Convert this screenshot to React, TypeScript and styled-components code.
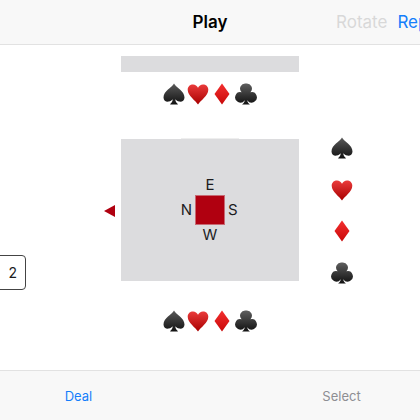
import React from "react";
import styled, {createGlobalStyle} from "styled-components";

const GlobalStyle = createGlobalStyle`
  html, body {
    margin: 0;
    padding: 0;
    background: white;
    overflow: hidden;
  }

  body {
    font-family: Inter, "Liberation Sans", sans-serif;
    color: #1c1c1e;
  }
`;

const StyledPage = styled.div`
  display: flex;
  flex-direction: column;
  width: 420px;
  height: 420px;
  overflow: hidden;
`;

const StyledHeader = styled.header`
  flex: 0 0 45px;
  box-sizing: border-box;
  display: flex;
  align-items: center;
  white-space: nowrap;
  overflow: hidden;
  background: #f8f8f8;
  border-bottom: 1px solid #e2e2e2;
`;

const StyledTitle = styled.div`
  flex: 0 0 420px;
  text-align: center;
  font-size: 17px;
  font-weight: 600;
  color: #000;
`;

const StyledHeaderActions = styled.div`
  display: flex;
  gap: 10px;
  margin-left: -84px;
`;

const StyledHeaderAction = styled.span<{ $disabled?: boolean }>`
  font-size: 17px;
  color: ${p => (p.$disabled ? "#d8d8d8" : "#147efb")};
`;

const StyledMain = styled.main`
  flex: 1;
  display: grid;
  grid-template-columns: 121px 178px 1fr;
  grid-template-rows: 16px 34px 33px 142px 52px;
  padding-top: 11px;
`;

const StyledBar = styled.div`
  grid-column: 2;
  grid-row: 1;
  background: #dcdcde;
`;

const StyledSuitRow = styled.div<{ $row: number }>`
  grid-column: 2;
  grid-row: ${p => p.$row};
  align-self: end;
  display: flex;
  justify-content: center;
`;

const StyledLeftCell = styled.div`
  grid-column: 1;
  grid-row: 4;
  display: flex;
  flex-direction: column;
`;

const StyledArrow = styled.div`
  align-self: flex-end;
  width: 0;
  height: 0;
  margin: 66px 6px 0 0;
  border-top: 6px solid transparent;
  border-bottom: 6px solid transparent;
  border-right: 11px solid #b00010;
`;

const StyledCountButton = styled.div`
  box-sizing: border-box;
  flex: 0 0 35px;
  width: 40px;
  margin: 38px 0 -9px -14px;
  padding-right: 8px;
  display: flex;
  align-items: center;
  justify-content: flex-end;
  border: 1px solid #444;
  border-radius: 4px;
  font-size: 14px;
  background: white;
`;

const StyledBoard = styled.div`
  position: relative;
  grid-column: 2;
  grid-row: 4;
  display: grid;
  grid-template-columns: 1fr 30px 1fr;
  grid-template-rows: 1fr 30px 1fr;
  background: #dcdcde;

  &::before {
    content: "";
    position: absolute;
    top: -1px;
    left: 60px;
    width: 58px;
    height: 1px;
    background: #eeeeee;
  }
`;

const StyledSeat = styled.div<{ $col: number; $row: number; $align: string; $justify: string }>`
  grid-column: ${p => p.$col};
  grid-row: ${p => p.$row};
  display: flex;
  align-items: ${p => p.$align};
  justify-content: ${p => p.$justify};
  padding: 2px 3px;
  font-size: 15px;
  line-height: 16px;
  color: #1c1c1e;
`;

const StyledCenter = styled.div`
  grid-column: 2;
  grid-row: 2;
  background: #b00010;
  box-shadow: 0 0 0 1px #c76a74 inset;
`;

const StyledRightCell = styled.div`
  grid-column: 3;
  grid-row: 4;
  display: flex;
  flex-direction: column;
  align-items: flex-start;
  gap: 17.5px;
  margin-top: -3px;
  padding-left: 31px;
`;

const StyledFooter = styled.footer`
  flex: 0 0 50px;
  box-sizing: border-box;
  display: flex;
  justify-content: space-between;
  align-items: center;
  background: #f8f8f8;
  border-top: 1px solid #e2e2e2;
`;

const StyledFooterAction = styled.div<{ $disabled?: boolean }>`
  flex: 0 0 157px;
  text-align: center;
  font-size: 13px;
  color: ${p => (p.$disabled ? "#8e8e93" : "#147efb")};
`;

const StyledSuitCell = styled.div`
  flex: 0 0 23.5px;
  display: flex;
  justify-content: center;
`;

const StyledSuitSvg = styled.svg`
  display: block;
  flex: 0 0 24px;
  width: 24px;
  height: 24px;
`;

type SuitName = "spade" | "heart" | "diamond" | "club";

const SUITS: SuitName[] = ["spade", "heart", "diamond", "club"];

const SUIT_SHAPES: Record<SuitName, React.ReactNode> = {
    spade: <path d="M12 1.500C10 5.500 1.500 9 1.500 15.400c0 3.300 2.800 4.800 5.300 4.200 1.600-.4 2.900-1.300 3.900-2.400-.1 2-1 3.500-2.500 4.800v.5h7.600v-.5c-1.500-1.300-2.400-2.800-2.500-4.800 1 1.100 2.300 2 3.900 2.400 2.500.6 5.300-.9 5.300-4.200C22.500 9 14 5.500 12 1.500Z"/>,
    heart: <path d="M12 22.500C9.500 18.500 1.700 13.800 1.700 7.800 1.700 4.400 4.200 2.500 7 2.500c2.300 0 4 1.300 5 3.200 1-1.900 2.700-3.200 5-3.200 2.800 0 5.300 1.900 5.300 5.300 0 6-7.800 10.700-10.300 14.700Z"/>,
    diamond: <path d="M12 1.500 19.500 12 12 22.500 4.500 12Z"/>,
    club: <path d="M12 1.500a5.200 5.200 0 0 0-4.400 8.800 5.200 5.200 0 1 0 3.100 7.900c-.1 1.700-1 3-2.400 4v.3h7.400v-.3c-1.400-1-2.300-2.300-2.400-4a5.200 5.200 0 1 0 3.100-7.900A5.200 5.200 0 0 0 12 1.500Z"/>,
};

const SUIT_COLORS: Record<SuitName, [string, string]> = {
    spade: ["#5a5a5a", "#111111"],
    heart: ["#ea3b3b", "#a80000"],
    diamond: ["#f43030", "#c80808"],
    club: ["#5f5f5f", "#111111"],
};

const Suit = ({name}: { name: SuitName }) => {
    const [from, to] = SUIT_COLORS[name];
    return (
        <StyledSuitSvg viewBox="0 0 24 24">
            <defs>
                <linearGradient id={`suit-${name}`} x1="0" y1="0" x2="0" y2="1">
                    <stop offset="0" stopColor={from}/>
                    <stop offset="1" stopColor={to}/>
                </linearGradient>
            </defs>
            <g fill={`url(#suit-${name})`}>{SUIT_SHAPES[name]}</g>
        </StyledSuitSvg>
    );
};

const SuitList = () => (
    <>
        {SUITS.map(name => (
            <StyledSuitCell key={name}>
                <Suit name={name}/>
            </StyledSuitCell>
        ))}
    </>
);

const App = () => (
    <StyledPage>
        <GlobalStyle/>
        <StyledHeader>
            <StyledTitle>Play</StyledTitle>
            <StyledHeaderActions>
                <StyledHeaderAction $disabled>Rotate</StyledHeaderAction>
                <StyledHeaderAction>Replay</StyledHeaderAction>
            </StyledHeaderActions>
        </StyledHeader>
        <StyledMain>
            <StyledBar/>
            <StyledSuitRow $row={2}>
                <SuitList/>
            </StyledSuitRow>
            <StyledLeftCell>
                <StyledArrow/>
                <StyledCountButton>2</StyledCountButton>
            </StyledLeftCell>
            <StyledBoard>
                <StyledSeat $col={2} $row={1} $align="flex-end" $justify="center">E</StyledSeat>
                <StyledSeat $col={1} $row={2} $align="center" $justify="flex-end">N</StyledSeat>
                <StyledCenter/>
                <StyledSeat $col={3} $row={2} $align="center" $justify="flex-start">S</StyledSeat>
                <StyledSeat $col={2} $row={3} $align="flex-start" $justify="center">W</StyledSeat>
            </StyledBoard>
            <StyledRightCell>
                {SUITS.map(name => <Suit key={name} name={name}/>)}
            </StyledRightCell>
            <StyledSuitRow $row={5}>
                <SuitList/>
            </StyledSuitRow>
        </StyledMain>
        <StyledFooter>
            <StyledFooterAction>Deal</StyledFooterAction>
            <StyledFooterAction $disabled>Select</StyledFooterAction>
        </StyledFooter>
    </StyledPage>
);

export default App;
